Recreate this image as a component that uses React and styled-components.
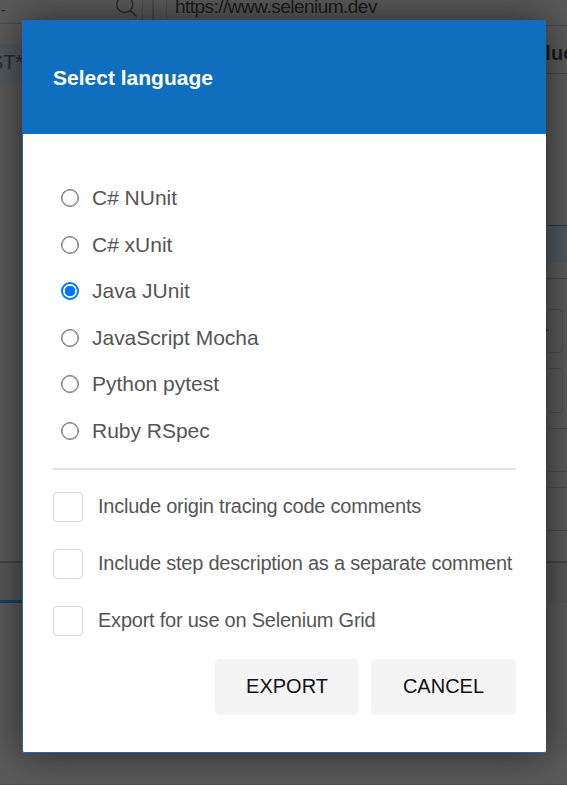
import React, { useState } from "react";
import styled, { createGlobalStyle } from "styled-components";

const GlobalStyle = createGlobalStyle`
  * { box-sizing: border-box; }
  body {
    margin: 0;
    overflow: hidden;
    font-family: "Liberation Sans", Arial, sans-serif;
  }
`;

const Screen = styled.div`
  position: relative;
  width: 567px;
  height: 785px;
  overflow: hidden;
  background: #5a5a5a;
  border-bottom: 1px solid #505050;
`;

const Workspace = styled.div`
  display: grid;
  grid-template-columns: 154px 1fr;
  height: 561px;
`;

const Sidebar = styled.div`
  display: flex;
  flex-direction: column;
  border-right: 2px solid #494949;
`;

const SearchBox = styled.div`
  display: flex;
  justify-content: space-between;
  width: 143px;
  height: 24px;
  padding: 0 4px 0 1px;
  font-size: 14px;
  line-height: 21px;
  color: #2b2b2b;
  border-right: 1px solid #4c4c4c;
  border-bottom: 1px solid #4c4c4c;
`;

const TestItem = styled.div`
  height: 39px;
  margin-top: 20px;
  background: #51585c;
  color: #2b2b2b;
  font-size: 20px;
  line-height: 37px;
  text-indent: -10px;
`;

const Editor = styled.div`
  display: flex;
  flex-direction: column;
`;

const UrlField = styled.div`
  height: 25px;
  margin-left: 12px;
  padding-left: 8px;
  border-left: 1px solid #4c4c4c;
  font-size: 19px;
  letter-spacing: -0.52px;
  line-height: 14px;
  color: #1c1c1c;
`;

const TableHead = styled.div`
  height: 49px;
  padding: 15px 0 0 368px;
  border-top: 1px solid #4a4a4a;
  border-bottom: 1px solid #474747;
  font-size: 20px;
  font-weight: bold;
  line-height: 24px;
  color: #1c1c1c;
`;

const SelectedCommand = styled.div`
  height: 38px;
  margin-top: 151px;
  background: #51585d;
  border-top: 1px solid #203d5e;
`;

const CommandForm = styled.div`
  display: flex;
  flex-direction: column;
  margin-top: 15px;
  border-top: 1px solid #464646;
  padding-top: 30px;
`;

const Field = styled.div`
  display: flex;
  align-items: center;
  justify-content: flex-end;
  width: 409px;
  height: ${(p) => p.$height}px;
  margin-bottom: 15px;
  padding-right: 12px;
  border: 1px solid #4d4d4d;
  border-radius: 4px;
`;

const Line = styled.div`
  height: ${(p) => p.$height}px;
  border-top: 1px solid #4b4b4b;
`;

const LogTabs = styled.div`
  height: 42px;
  border-top: 2px solid #464646;
  background: #565656;
`;

const ActiveTab = styled.div`
  width: 90px;
  height: 40px;
  border-bottom: 3px solid #174266;
`;

const Dialog = styled.div`
  position: absolute;
  left: 22px;
  top: 20px;
  display: flex;
  flex-direction: column;
  width: 524px;
  height: 733px;
  background: #fff;
  border: 1px solid #2b61b5;
  border-right: 0;
  border-radius: 2px;
  box-shadow: 0 0 38px rgba(0, 0, 0, 0.58);
`;

const DialogHeader = styled.div`
  height: 113px;
  padding: 45px 30px 0;
  background: #106ebe;
  color: #fff;
  font-size: 21px;
  font-weight: bold;
  line-height: 24px;
`;

const DialogBody = styled.div`
  display: flex;
  flex-direction: column;
  padding: 41px 30px 0;
`;

const RadioList = styled.div`
  display: grid;
  grid-auto-rows: 46.55px;
  padding-left: 8px;
`;

const RadioLabel = styled.label`
  display: flex;
  align-items: center;
  gap: 13px;
  height: 46px;
  font-size: 21px;
  letter-spacing: -0.02px;
  color: #555;
`;

const RadioInput = styled.input`
  appearance: none;
  width: 18px;
  height: 18px;
  margin: 0;
  border: ${(p) => (p.checked ? "2px solid #0075ff" : "1px solid #767676")};
  border-radius: 50%;
  background: ${(p) => (p.checked ? "radial-gradient(circle, #0075ff 5px, #fff 5.6px)" : "#fff")};
  box-shadow: ${(p) => (p.checked ? "none" : "inset 0 0 0 0.6px #8a8a8a")};
`;

const Divider = styled.div`
  height: 2px;
  margin: 14px 0 22px;
  background: #e3e3e3;
`;

const OptionList = styled.div`
  display: flex;
  flex-direction: column;
  gap: 27px;
`;

const OptionLabel = styled.label`
  display: flex;
  align-items: center;
  gap: 15px;
  height: 30px;
  font-size: 20px;
  letter-spacing: -0.23px;
  color: #555;
  white-space: nowrap;
`;

const OptionText = styled.span`
  padding-bottom: 2px;
`;

const Checkbox = styled.input`
  appearance: none;
  flex: none;
  width: 30px;
  height: 30px;
  margin: 0;
  border: 1px solid #d9d9d9;
  border-radius: 4px;
  background: #fff;
`;

const Actions = styled.div`
  display: grid;
  grid-template-columns: 144px 145px;
  justify-content: end;
  gap: 12px;
  margin-top: 23px;
`;

const Button = styled.button`
  height: 56px;
  padding: 0 0 2px;
  border: 0;
  border-radius: 5px;
  background: #f4f4f4;
  color: #111;
  font: 20px "Liberation Sans", Arial, sans-serif;
`;

const languages = [
  "C# NUnit",
  "C# xUnit",
  "Java JUnit",
  "JavaScript Mocha",
  "Python pytest",
  "Ruby RSpec",
];

const options = [
  "Include origin tracing code comments",
  "Include step description as a separate comment",
  "Export for use on Selenium Grid",
];

const SearchIcon = () => (
  <svg width="24" height="20" viewBox="0 0 24 20" fill="none" stroke="#2a2a2a" strokeWidth="1.3">
    <circle cx="10.7" cy="4.5" r="8" />
    <path d="M16.3 10.5L22.5 16.5" />
  </svg>
);

const Caret = () => (
  <svg width="10" height="6" viewBox="0 0 10 6">
    <path d="M0 1h9L4.5 6z" fill="#303030" />
  </svg>
);

export default function App() {
  const [language, setLanguage] = useState("Java JUnit");
  return (
    <Screen>
      <GlobalStyle />
      <Workspace>
        <Sidebar>
          <SearchBox>
            <span>-</span>
            <SearchIcon />
          </SearchBox>
          <TestItem>ST*</TestItem>
        </Sidebar>
        <Editor>
          <UrlField>https://www.selenium.dev</UrlField>
          <TableHead>Value</TableHead>
          <SelectedCommand />
          <CommandForm>
            <Field $height={44}><Caret /></Field>
            <Field $height={45} />
            <Line $height={43} />
            <Line $height={16} />
            <Line $height={43} />
            <Line $height={31} />
          </CommandForm>
        </Editor>
      </Workspace>
      <LogTabs>
        <ActiveTab />
      </LogTabs>
      <Dialog>
        <DialogHeader>Select language</DialogHeader>
        <DialogBody>
          <RadioList>
            {languages.map((name) => (
              <RadioLabel key={name}>
                <RadioInput
                  type="radio"
                  name="language"
                  checked={language === name}
                  onChange={() => setLanguage(name)}
                />
                {name}
              </RadioLabel>
            ))}
          </RadioList>
          <Divider />
          <OptionList>
            {options.map((text) => (
              <OptionLabel key={text}>
                <Checkbox type="checkbox" />
                <OptionText>{text}</OptionText>
              </OptionLabel>
            ))}
          </OptionList>
          <Actions>
            <Button>EXPORT</Button>
            <Button>CANCEL</Button>
          </Actions>
        </DialogBody>
      </Dialog>
    </Screen>
  );
}
